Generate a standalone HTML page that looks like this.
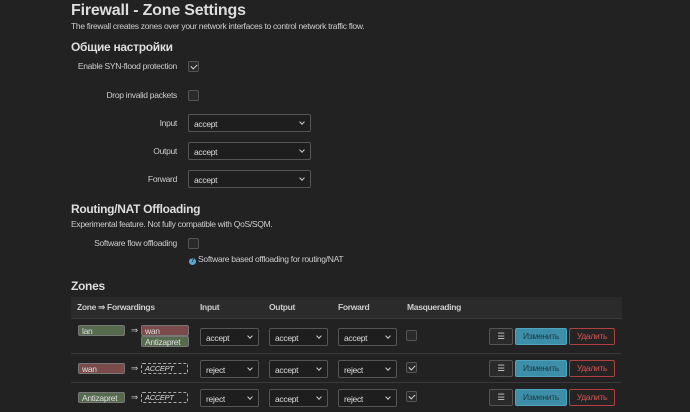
<!DOCTYPE html>
<html><head><meta charset="utf-8"><style>
*{box-sizing:border-box;margin:0;padding:0}
body{width:690px;height:412px;background:#222;font-family:"Liberation Sans",sans-serif;color:#ccc;position:relative;overflow:hidden;font-size:8.5px;letter-spacing:-0.3px}
.a{position:absolute;white-space:nowrap}
h1{position:absolute;left:71px;top:2px;font-size:16px;letter-spacing:-0.2px;color:#ddd;font-weight:bold}
h2{position:absolute;left:71px;font-size:12px;letter-spacing:-0.3px;color:#ddd;font-weight:bold}
.lbl{position:absolute;text-align:right;width:120px;left:57px;color:#ccc}
.cb{position:absolute;width:11px;height:11px;border:1px solid #555;border-radius:2px;background:#2a2a2a}
.cb.c::after{content:"";position:absolute;left:3px;top:1px;width:3px;height:5px;border:solid #ddd;border-width:0 1.3px 1.3px 0;transform:rotate(45deg)}
.sel{position:absolute;height:18px;border:1px solid #555;border-radius:2px;background:#1e1e1e;color:#ddd;padding:4px 5px}
.sel::after{content:"";position:absolute;right:6px;top:5px;width:3px;height:3px;border:solid #ccc;border-width:0 1.3px 1.3px 0;transform:rotate(45deg)}
.badge{position:absolute;height:11px;border-radius:2px;color:#ddd;padding:0 3px;line-height:10px;border:1px solid #777}
.g{background:#566b4e}.r{background:#7b4a4a}
.dash{position:absolute;height:11px;border:1px dashed #aaa;border-radius:2px;font-size:7.5px;font-style:italic;color:#ddd;padding:0 3px;line-height:9px;width:47px}
.btn{position:absolute;height:17px;border-radius:2px;text-align:center;line-height:15px}
.sep{position:absolute;left:71px;width:551px;height:1px;background:#3a3a3a}
</style></head><body>
<h1>Firewall - Zone Settings</h1>
<div class="a" style="left:71px;top:21px">The firewall creates zones over your network interfaces to control network traffic flow.</div>
<h2 style="top:40px">Общие настройки</h2>
<div class="lbl" style="top:61px">Enable SYN-flood protection</div><div class="cb c" style="left:188px;top:61px"></div>
<div class="lbl" style="top:90px">Drop invalid packets</div><div class="cb" style="left:188px;top:90px"></div>
<div class="lbl" style="top:118px">Input</div><div class="sel" style="left:188px;top:114px;width:123px">accept</div>
<div class="lbl" style="top:146px">Output</div><div class="sel" style="left:188px;top:142px;width:123px">accept</div>
<div class="lbl" style="top:174px">Forward</div><div class="sel" style="left:188px;top:170px;width:123px">accept</div>
<h2 style="top:202px">Routing/NAT Offloading</h2>
<div class="a" style="left:71px;top:219px">Experimental feature. Not fully compatible with QoS/SQM.</div>
<div class="lbl" style="top:238px">Software flow offloading</div><div class="cb" style="left:188px;top:238px"></div>
<div class="a" style="left:189px;top:254px"><span style="display:inline-block;width:7px;height:7px;border-radius:50%;background:#5aa8d0;color:#222;font-size:6px;text-align:center;line-height:7px;font-weight:bold;letter-spacing:0">?</span> Software based offloading for routing/NAT</div>
<h2 style="top:279px">Zones</h2>
<div class="a" style="left:71px;top:297px;width:551px;height:21px;background:#2b2b2b"></div>
<div class="a" style="left:77px;top:302px;font-weight:bold">Zone ⇒ Forwardings</div>
<div class="a" style="left:200px;top:302px;font-weight:bold">Input</div>
<div class="a" style="left:269px;top:302px;font-weight:bold">Output</div>
<div class="a" style="left:338px;top:302px;font-weight:bold">Forward</div>
<div class="a" style="left:407px;top:302px;font-weight:bold">Masquerading</div>
<div class="sep" style="top:318px"></div>
<div class="sep" style="top:353px"></div>
<div class="sep" style="top:382px"></div>

<div class="badge g" style="left:78px;top:325px;width:47px">lan</div><div class="a" style="left:131px;top:325px">⇒</div>
<div class="badge r" style="left:141px;top:325px;width:48px">wan</div><div class="badge g" style="left:141px;top:336px;width:48px">Antizapret</div>
<div class="sel" style="left:200px;top:328px;width:59px">accept</div><div class="sel" style="left:269px;top:328px;width:59px">accept</div><div class="sel" style="left:338px;top:328px;width:59px">accept</div>
<div class="cb" style="left:406px;top:330px"></div>

<div class="badge r" style="left:78px;top:363px;width:47px">wan</div><div class="a" style="left:131px;top:363px">⇒</div><div class="dash" style="left:141px;top:363px">ACCEPT</div>
<div class="sel" style="left:200px;top:360px;width:59px">reject</div><div class="sel" style="left:269px;top:360px;width:59px">accept</div><div class="sel" style="left:338px;top:360px;width:59px">reject</div>
<div class="cb c" style="left:406px;top:362px"></div>

<div class="badge g" style="left:78px;top:392px;width:47px">Antizapret</div><div class="a" style="left:131px;top:392px">⇒</div><div class="dash" style="left:141px;top:392px">ACCEPT</div>
<div class="sel" style="left:200px;top:389px;width:59px">reject</div><div class="sel" style="left:269px;top:389px;width:59px">accept</div><div class="sel" style="left:338px;top:389px;width:59px">reject</div>
<div class="cb c" style="left:406px;top:391px"></div>

<div class="btn" style="left:489px;top:328px;width:24px;border:1px solid #555;background:#2a2a2a">☰</div>
<div class="btn" style="left:515px;top:328px;width:52px;background:#3d8ea8;border:1px solid #4fa3bd;color:#1e3a44">Изменить</div>
<div class="btn" style="left:569px;top:328px;width:46px;border:1px solid #b04040;background:#242424;color:#d9534f">Удалить</div>
<div class="btn" style="left:489px;top:360px;width:24px;border:1px solid #555;background:#2a2a2a">☰</div>
<div class="btn" style="left:515px;top:360px;width:52px;background:#3d8ea8;border:1px solid #4fa3bd;color:#1e3a44">Изменить</div>
<div class="btn" style="left:569px;top:360px;width:46px;border:1px solid #b04040;background:#242424;color:#d9534f">Удалить</div>
<div class="btn" style="left:489px;top:389px;width:24px;border:1px solid #555;background:#2a2a2a">☰</div>
<div class="btn" style="left:515px;top:389px;width:52px;background:#3d8ea8;border:1px solid #4fa3bd;color:#1e3a44">Изменить</div>
<div class="btn" style="left:569px;top:389px;width:46px;border:1px solid #b04040;background:#242424;color:#d9534f">Удалить</div>
</body></html>
